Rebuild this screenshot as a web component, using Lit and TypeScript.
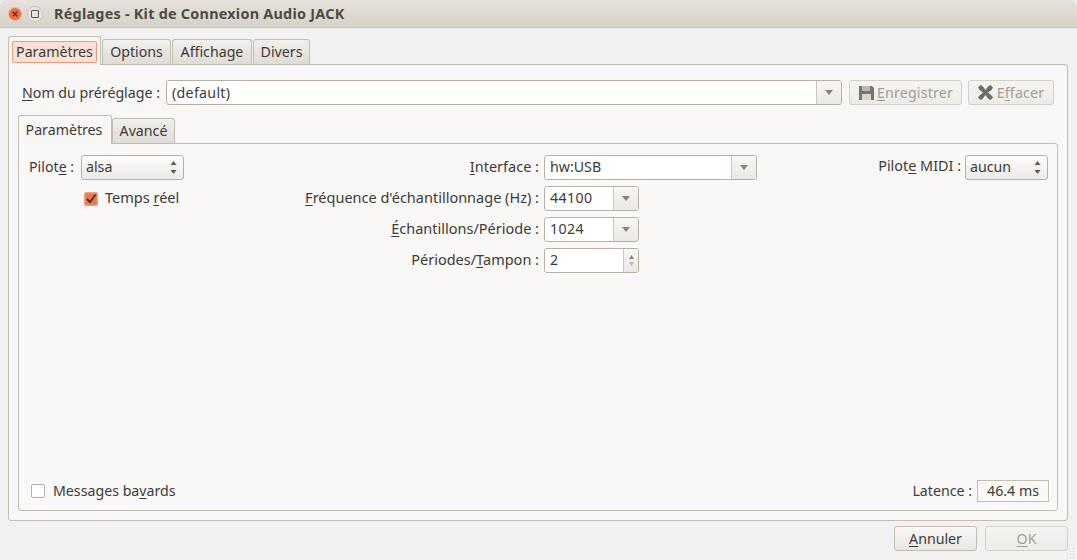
import { LitElement, html, css } from "lit";
import { customElement } from "lit/decorators.js";

const arrow = html`<svg class="arrow" width="8" height="5" viewBox="0 0 8 5"><path d="M0 0h8L4 5z" fill="#85837d"/></svg>`;
const updown = html`<svg class="updown" width="7" height="13" viewBox="0 0 7 13"><path d="M3.5 0L6.5 4H.5z M.5 9h6L3.5 13z" fill="#5c5a55"/></svg>`;

@customElement("app-root")
export class AppRoot extends LitElement {
  static styles = css`
    :host {
      display: block;
      width: 1077px;
      height: 560px;
      overflow: hidden;
      background: #f2f1f0;
      color: #3c3b37;
      font-family: "Noto Sans", sans-serif;
      font-size: 14.2px;
      line-height: 20px;
    }
    * { box-sizing: border-box; }
    u { text-decoration-thickness: 1px; text-underline-offset: 2px; }
    .window { height: 560px; display: flex; flex-direction: column; position: relative; }
    .titlebar {
      height: 28px; flex: none; display: flex; align-items: center;
      background: linear-gradient(#e6e2db, #d6d2ca);
      border-bottom: 1px solid #c8c4bc;
      border-radius: 6px 6px 0 0;
    }
    .wbtns { display: flex; align-items: center; margin-left: 8px; gap: 5px; width: 46px; }
    .title { font-weight: 700; font-size: 14.4px; letter-spacing: 0.25px; color: #4c4a45; white-space: nowrap; }
    .body { flex: 1; display: flex; flex-direction: column; padding: 8px 9px 9px 8px; min-height: 0; }
    .tabs { display: flex; align-items: flex-end; height: 28px; flex: none; position: relative; z-index: 1; }
    .tab {
      height: 25px; display: flex; align-items: center; justify-content: center;
      border: 1px solid #c3bdb3; border-bottom: none; margin-left: 1px;
      border-radius: 3px 3px 0 0;
      background: linear-gradient(#f2f0ed, #dfdbd5);
    }
    .tab.on { background: #f8f7f5; height: 29px; margin-left: 0; margin-bottom: -1px; }
    .t1 { width: 93px; } .t2 { width: 69px; } .t3 { width: 80px; } .t4 { width: 57px; }
    .focus {
      width: 85px; height: 22px; display: flex; align-items: center; justify-content: center;
      background: #fbe0d6; border: 1px solid #ee9a7b; border-radius: 2px; margin-top: 2px;
    }
    .panel {
      flex: 1; min-height: 0; display: flex; flex-direction: column;
      background: #f8f7f5; border: 1px solid #c3bdb3; border-radius: 0 3px 3px 3px;
      padding: 15px 9px 9px 9px;
    }
    .namerow { display: flex; align-items: center; height: 25px; flex: none; }
    .namelabel { width: 148px; padding-left: 4px; white-space: nowrap; }
    .combo {
      height: 25px; display: flex; align-items: stretch; background: #fff;
      border: 1px solid #b8b0a5; border-radius: 3px; overflow: hidden;
    }
    .combo .val { flex: 1; padding-left: 5px; display: flex; align-items: center; white-space: nowrap; }
    .combo .drop {
      width: 25px; flex: none; display: flex; align-items: center; justify-content: center;
      border-left: 1px solid #cbc6bd; background: linear-gradient(#f8f7f5, #eae8e4);
    }
    .name { width: 676px; }
    .name .val { letter-spacing: 0.3px; }
    .btn {
      height: 25px; display: flex; align-items: center; justify-content: center; gap: 2px;
      border: 1px solid #c3bdb3; border-radius: 3px; white-space: nowrap;
      background: linear-gradient(#f9f8f7, #e9e6e2);
    }
    .btn.off { color: #a29e97; background: linear-gradient(#f5f4f2, #ecebe8); border-color: #d5d1ca; }
    .save { width: 113px; margin-left: 7px; letter-spacing: 0.2px; }
    .clear { width: 86px; margin-left: 6px; gap: 4px; letter-spacing: 0.2px; }
    .inner { flex: 1; min-height: 0; display: flex; flex-direction: column; margin: 9px 3px 0 0; }
    .subtabs { display: flex; align-items: flex-end; height: 29px; flex: none; position: relative; z-index: 1; }
    .subtabs .a { width: 94px; padding-right: 2px; }
    .subtabs .b { width: 63px; margin-left: 0; }
    .subpanel {
      flex: 1; min-height: 0; display: flex; flex-direction: column; justify-content: space-between;
      background: #f9f8f6; border: 1px solid #c3bdb3; border-radius: 0 3px 3px 3px;
      padding: 11px 9px 8px 10px; margin-right: -3px;
    }
    .grid {
      display: grid; grid-template-columns: 52px 103px 360px 213px 1fr;
      grid-auto-rows: 25px; row-gap: 6px; align-items: center;
    }
    .grid .lab, .grid .val, .grid .sel span { padding-bottom: 2px; }
    .grid .right, .grid .midi .lab, .grid .check span { padding-bottom: 4px; }
    .lab { white-space: nowrap; }
    .right { text-align: right; padding-right: 5px; font-size: 14.5px; }
    .sel {
      height: 25px; display: flex; align-items: center; justify-content: space-between;
      padding: 0 6px 0 4px; border: 1px solid #b8b0a5; border-radius: 3px;
      background: linear-gradient(#fdfdfc, #ebe9e5);
    }
    .midi { display: flex; align-items: center; justify-content: flex-end; gap: 4px; }
    .midi .lab { font-size: 14.4px; }
    .midi .sel { width: 83px; }
    .short { width: 95px; }
    .short .val { letter-spacing: 0.4px; }
    .spin .drop { width: 15px; flex-direction: column; gap: 3px; }
    .check { display: flex; align-items: center; gap: 7px; white-space: nowrap; }
    .cb { width: 14px; height: 14px; border-radius: 2px; flex: none; }
    .cb.on {
      background: #e8774c; border: 1px solid #e9a184; box-shadow: inset 0 0 0 1px #ec8a63;
      display: flex; align-items: center; justify-content: center;
    }
    .cb.offb { background: #fff; border: 1px solid #b5aea4; }
    .temps { grid-column: 1 / 3; margin-left: 55px; font-size: 14.5px; }
    .foot { display: flex; justify-content: space-between; align-items: center; height: 22px; padding-left: 2px; }
    .foot .check { gap: 8px; }
    .lat { display: flex; align-items: center; gap: 5px; margin-right: -1px; }
    .latbox { width: 72px; height: 22px; border: 1px solid #c3bdb3; display: flex; align-items: center; justify-content: center; }
    .actions { display: flex; justify-content: flex-end; gap: 8px; flex: none; margin-top: 5px; }
    .actions .btn { width: 83px; }
    .grip { position: absolute; right: 2px; bottom: 1px; }
  `;

  render() {
    return html`
      <div class="window">
        <div class="titlebar">
          <div class="wbtns">
            <svg width="14" height="14" viewBox="0 0 14 14">
              <circle cx="7" cy="7" r="7" fill="#f3b497"/>
              <circle cx="7" cy="7" r="6" fill="#ef6c3f"/>
              <path d="M4.8 4.8l4.4 4.4M9.2 4.8l-4.4 4.4" stroke="#4a3228" stroke-width="1.3"/>
            </svg>
            <svg width="16" height="16" viewBox="0 0 16 16">
              <circle cx="8" cy="8" r="7.6" fill="#e8e5e0" stroke="#c4c0b8" stroke-width=".8"/>
              <rect x="4.5" y="4.5" width="7" height="7" rx=".5" fill="none" stroke="#5a5853"/>
            </svg>
          </div>
          <div class="title">Réglages - Kit de Connexion Audio JACK</div>
        </div>
        <div class="body">
          <div class="tabs">
            <div class="tab on t1"><div class="focus">Paramètres</div></div>
            <div class="tab t2">Options</div>
            <div class="tab t3">Affichage</div>
            <div class="tab t4">Divers</div>
          </div>
          <div class="panel">
            <div class="namerow">
              <div class="namelabel"><u>N</u>om du préréglage :</div>
              <div class="combo name"><div class="val">(default)</div><div class="drop">${arrow}</div></div>
              <div class="btn off save">
                <svg width="17" height="16" viewBox="0 0 17 16">
                  <path d="M1 1h13l2 2v12H1z" fill="#77756f"/>
                  <rect x="4" y="1" width="8" height="5" fill="#b9b7b2"/>
                  <rect x="4" y="9" width="9" height="6" fill="#d9d7d3"/>
                </svg>
                <span><u>E</u>nregistrer</span>
              </div>
              <div class="btn off clear">
                <svg width="15" height="15" viewBox="0 0 15 15">
                  <path d="M0 2.5L2.5 0 5 1.5 7.5 5 10 1.5 12.5 0 15 2.5 13.5 5 10 7.5l3.5 3 1.5 2L12.5 15 10 13.5l-2.5-3.5L5 13.5 2.5 15 0 12.5l1.5-2 3.5-3-3.5-2.5z" fill="#6f6d67"/>
                </svg>
                <span>E<u>f</u>facer</span>
              </div>
            </div>
            <div class="inner">
              <div class="subtabs">
                <div class="tab on a">Paramètres</div>
                <div class="tab b">Avancé</div>
              </div>
              <div class="subpanel">
                <div class="grid">
                  <div class="lab">Pilot<u>e</u> :</div>
                  <div class="sel"><span>alsa</span>${updown}</div>
                  <div class="lab right"><u>I</u>nterface :</div>
                  <div class="combo"><div class="val">hw:USB</div><div class="drop">${arrow}</div></div>
                  <div class="midi">
                    <span class="lab">Pilot<u>e</u> MIDI :</span>
                    <div class="sel"><span>aucun</span>${updown}</div>
                  </div>

                  <div class="check temps">
                    <div class="cb on">
                      <svg width="12" height="12" viewBox="0 0 12 12"><path d="M2 6l3 3 5.5-7.5" fill="none" stroke="#4a3228" stroke-width="1.8"/></svg>
                    </div>
                    <span>Temps <u>r</u>éel</span>
                  </div>
                  <div class="lab right"><u>F</u>réquence d'échantillonnage (Hz) :</div>
                  <div class="combo short"><div class="val">44100</div><div class="drop">${arrow}</div></div>
                  <div></div>

                  <div></div><div></div>
                  <div class="lab right"><u>É</u>chantillons/Période :</div>
                  <div class="combo short"><div class="val">1024</div><div class="drop">${arrow}</div></div>
                  <div></div>

                  <div></div><div></div>
                  <div class="lab right">Périodes/<u>T</u>ampon :</div>
                  <div class="combo short spin">
                    <div class="val">2</div>
                    <div class="drop">
                      <svg width="5" height="4" viewBox="0 0 5 4"><path d="M2.5 0L5 4H0z" fill="#85837d"/></svg>
                      <svg width="5" height="4" viewBox="0 0 5 4"><path d="M0 0h5L2.5 4z" fill="#bbb8b2"/></svg>
                    </div>
                  </div>
                  <div></div>
                </div>
                <div class="foot">
                  <div class="check">
                    <div class="cb offb"></div>
                    <span>Messages ba<u>v</u>ards</span>
                  </div>
                  <div class="lat"><span>Latence :</span><div class="latbox">46.4 ms</div></div>
                </div>
              </div>
            </div>
          </div>
          <div class="actions">
            <div class="btn"><span><u>A</u>nnuler</span></div>
            <div class="btn off"><span><u>O</u>K</span></div>
          </div>
        </div>
        <svg class="grip" width="8" height="11" viewBox="0 0 8 11">
          <path d="M6 0h1v1H6zM3 3h1v1H3zM6 3h1v1H6zM0 6h1v1H0zM3 6h1v1H3zM6 6h1v1H6zM0 9h1v1H0zM3 9h1v1H3zM6 9h1v1H6z" fill="#d5d2cc"/>
        </svg>
      </div>
    `;
  }
}
